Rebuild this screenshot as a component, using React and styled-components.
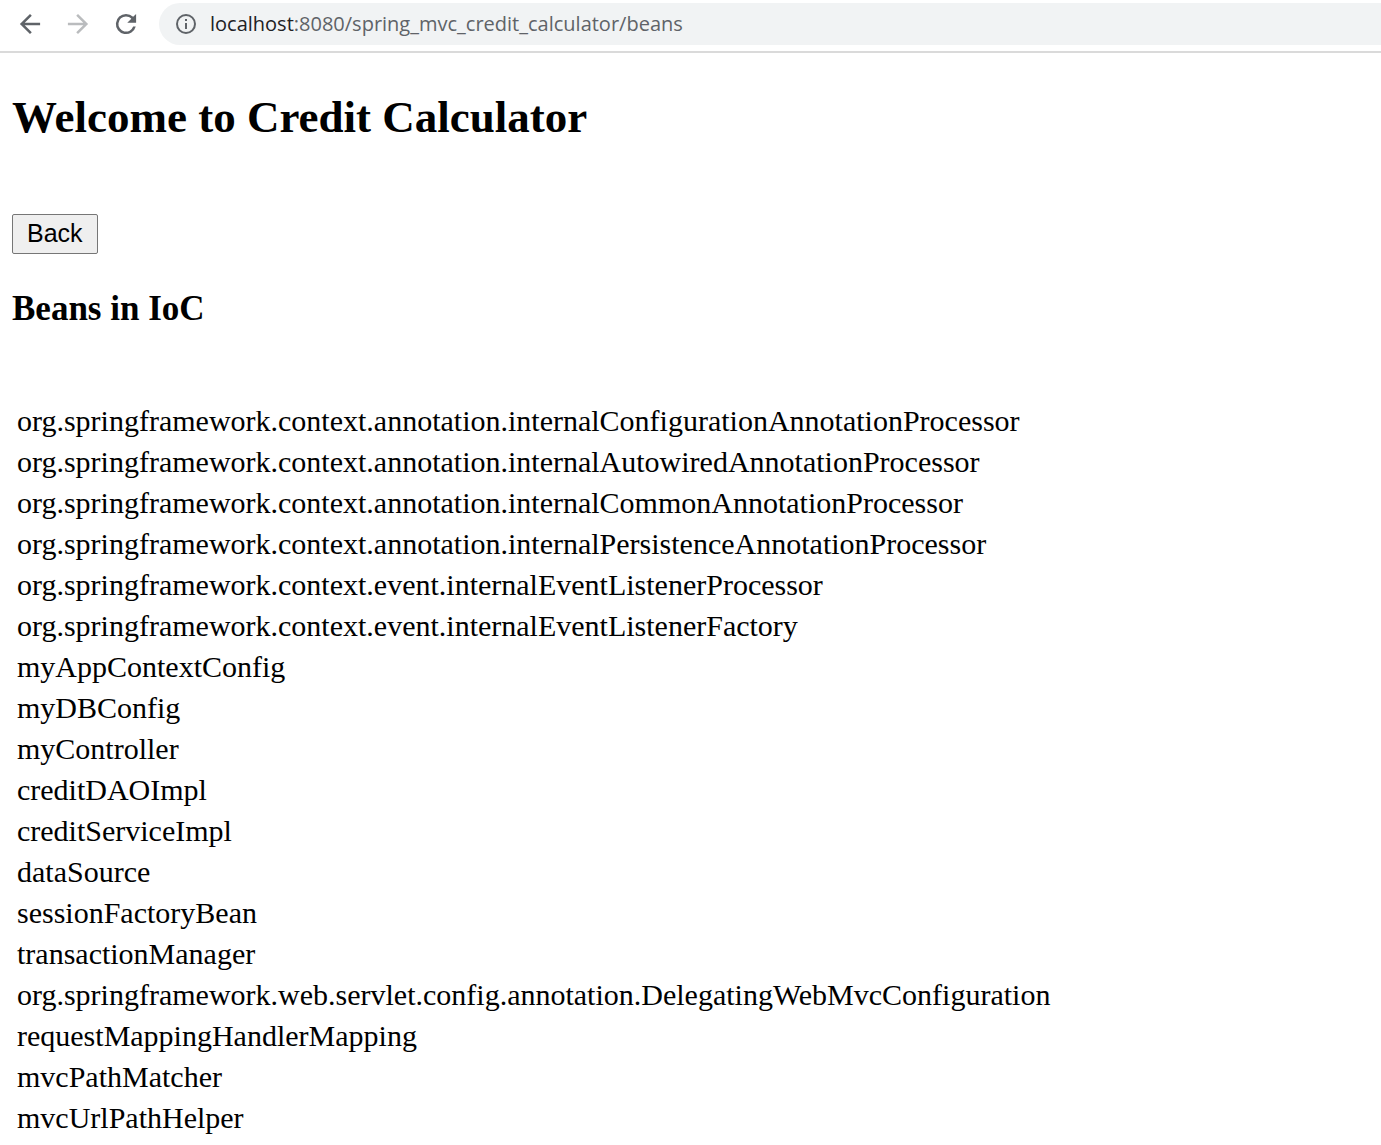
import React from "react";
import styled, { createGlobalStyle } from "styled-components";

const GlobalStyle = createGlobalStyle`
  html, body { margin: 0; background: #fff; }
  body { font-family: "Liberation Serif", "Times New Roman", serif; color: #000; }
`;

const Toolbar = styled.header`
  display: flex;
  align-items: center;
  padding: 3px 0 6px 18px;
  border-bottom: 2px solid #dadada;
`;

const Navigation = styled.nav`
  display: flex;
  gap: 24px;
  margin-right: 21px;
`;

const NavButton = styled.button`
  display: flex;
  width: 24px;
  height: 24px;
  padding: 0;
  border: 0;
  background: none;
  color: ${(p) => (p.disabled ? "#babcbe" : "#5f6368")};
`;

const Icon = styled.svg`
  width: 24px;
  height: 24px;
  fill: currentColor;
`;

const AddressBar = styled.div`
  display: flex;
  flex: 1;
  align-items: center;
  height: 42px;
  padding-left: 15px;
  gap: 12px;
  border-radius: 21px 0 0 21px;
  background: #f1f3f4;
  color: #5f6368;
  font: 20px/30px "Open Sans", "Noto Sans", sans-serif;
`;

const Host = styled.span`
  color: #202124;
`;

const Content = styled.main`
  padding: 0 12px;
`;

const Title = styled.h1`
  margin: 38px 0 71px;
  font-size: 45px;
  line-height: 52px;
`;

const BackButton = styled.button`
  display: block;
  height: 40px;
  padding: 0 14px 2px;
  border: 1px solid #767676;
  border-radius: 2px;
  background: #efefef;
  color: #000;
  font: 25px/36px "Liberation Sans", Arial, sans-serif;
`;

const Subtitle = styled.h2`
  margin: 35px 0 70px;
  font-size: 35px;
  line-height: 40px;
`;

const BeanTable = styled.table`
  border-spacing: 3px;
`;

const BeanCell = styled.td`
  padding: 2px;
  font-size: 30px;
  line-height: 34px;
`;

const beans = [
  "org.springframework.context.annotation.internalConfigurationAnnotationProcessor",
  "org.springframework.context.annotation.internalAutowiredAnnotationProcessor",
  "org.springframework.context.annotation.internalCommonAnnotationProcessor",
  "org.springframework.context.annotation.internalPersistenceAnnotationProcessor",
  "org.springframework.context.event.internalEventListenerProcessor",
  "org.springframework.context.event.internalEventListenerFactory",
  "myAppContextConfig",
  "myDBConfig",
  "myController",
  "creditDAOImpl",
  "creditServiceImpl",
  "dataSource",
  "sessionFactoryBean",
  "transactionManager",
  "org.springframework.web.servlet.config.annotation.DelegatingWebMvcConfiguration",
  "requestMappingHandlerMapping",
  "mvcPathMatcher",
  "mvcUrlPathHelper",
];

export default function App() {
  return (
    <>
      <GlobalStyle />
      <Toolbar>
        <Navigation>
          <NavButton aria-label="Go back">
            <Icon viewBox="2.5 2.5 19 19">
              <path d="M20 11H7.830l5.590-5.590L12 4l-8 8 8 8 1.410-1.410L7.830 13H20z" />
            </Icon>
          </NavButton>
          <NavButton aria-label="Go forward" disabled>
            <Icon viewBox="2.5 2.5 19 19">
              <path d="M12 4l-1.410 1.410L16.170 11H4v2h12.170l-5.580 5.590L12 20l8-8z" />
            </Icon>
          </NavButton>
          <NavButton aria-label="Reload">
            <Icon viewBox="2.5 2.5 19 19">
              <path d="M17.650 6.350A7.960 7.960 0 0 0 12 4a8 8 0 1 0 7.730 10h-2.080A6 6 0 1 1 12 6c1.660 0 3.140.690 4.220 1.780L13 11h7V4z" />
            </Icon>
          </NavButton>
        </Navigation>
        <AddressBar>
          <Icon viewBox="0 0 24 24">
            <path d="M11 7h2v2h-2zM11 11h2v6h-2zM12 2a10 10 0 1 0 0 20 10 10 0 0 0 0-20zM12 20a8 8 0 1 1 0-16 8 8 0 0 1 0 16z" />
          </Icon>
          <span><Host>localhost</Host>:8080/spring_mvc_credit_calculator/beans</span>
        </AddressBar>
      </Toolbar>
      <Content>
        <Title>Welcome to Credit Calculator</Title>
        <BackButton>Back</BackButton>
        <Subtitle>Beans in IoC</Subtitle>
        <BeanTable>
          <tbody>
            {beans.map((bean) => (
              <tr key={bean}>
                <BeanCell>{bean}</BeanCell>
              </tr>
            ))}
          </tbody>
        </BeanTable>
      </Content>
    </>
  );
}
